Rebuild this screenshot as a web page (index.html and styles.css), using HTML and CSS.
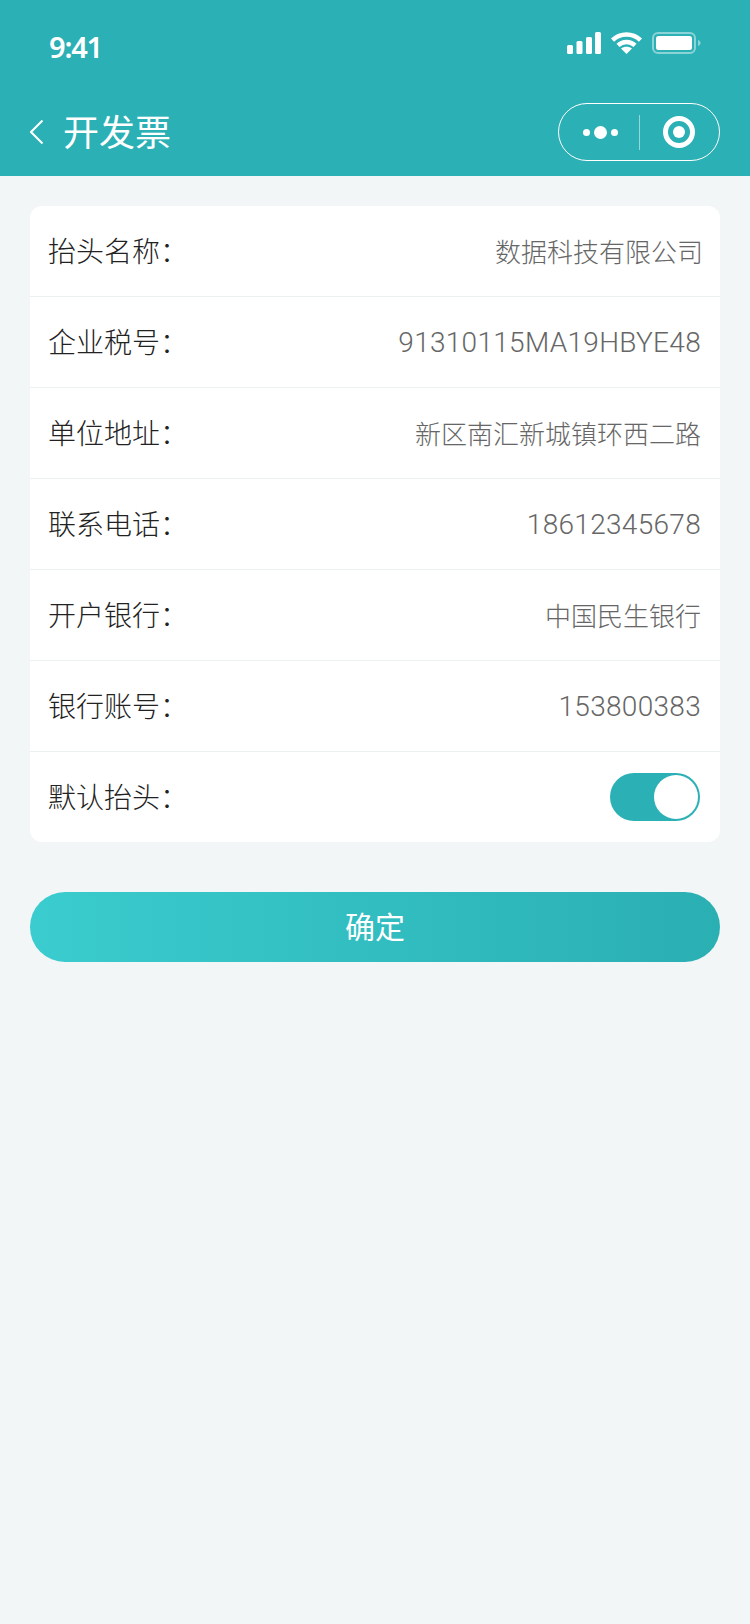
FILE: index.html
```html
<!DOCTYPE html>
<html lang="zh-CN">
<head>
    <meta charset="UTF-8">
    <meta name="viewport" content="width=device-width, initial-scale=1.0">
    <title>开发票</title>
    <link rel="stylesheet" href="styles.css">
</head>
<body>
    <div class="header">
        <div class="status-bar">
            <span class="time">9:41</span>
            <div class="status-icons">
                <svg width="34" height="22" viewBox="0 0 34 22" fill="#fff">
                    <rect x="0" y="13" width="6" height="9" rx="1.5"/>
                    <rect x="9.500" y="9" width="6" height="13" rx="1.5"/>
                    <rect x="19" y="5" width="6" height="17" rx="1.5"/>
                    <rect x="28" y="0" width="6" height="22" rx="1.5"/>
                </svg>
                <svg width="31" height="22" viewBox="0 0 31 22" fill="none" stroke="#fff" stroke-width="4.500">
                    <path d="M1.500 8.200C9.500 .6 21.500 .6 29.500 8.200"/>
                    <path d="M7 13.400c5-4.600 12-4.600 17 0"/>
                    <path d="M15.500 22l-5.500-5.500c3-2.400 8-2.400 11 0z" fill="#fff" stroke="none"/>
                </svg>
                <svg width="49" height="22" viewBox="0 0 49 22">
                    <rect x="1" y="1" width="42" height="20" rx="5" fill="none" stroke="#fff" stroke-opacity=".45" stroke-width="2"/>
                    <rect x="4" y="4" width="36" height="14" rx="2.500" fill="#fff"/>
                    <path d="M46 8c1.600.5 2.600 1.600 2.600 3s-1 2.500-2.600 3z" fill="#fff" fill-opacity=".45"/>
                </svg>
            </div>
        </div>
        <div class="nav-bar">
            <svg class="back" width="15" height="26" viewBox="0 0 15 26" fill="none" stroke="#fff" stroke-width="2">
                <path d="M12.500 1.500L1 13l11.500 11.500"/>
            </svg>
            <span class="nav-title">开发票</span>
            <div class="capsule">
                <div class="capsule-more">
                    <i class="dot"></i><i class="dot dot-big"></i><i class="dot"></i>
                </div>
                <div class="capsule-line"></div>
                <div class="capsule-close"><i class="target"></i></div>
            </div>
        </div>
    </div>

    <div class="content">
        <div class="card">
            <div class="row"><span class="label">抬头名称：</span><span class="value value-first">数据科技有限公司</span></div>
            <div class="row"><span class="label">企业税号：</span><span class="value value-num">91310115MA19HBYE48</span></div>
            <div class="row"><span class="label">单位地址：</span><span class="value">新区南汇新城镇环西二路</span></div>
            <div class="row"><span class="label">联系电话：</span><span class="value value-num">18612345678</span></div>
            <div class="row"><span class="label">开户银行：</span><span class="value">中国民生银行</span></div>
            <div class="row"><span class="label">银行账号：</span><span class="value value-num">153800383</span></div>
            <div class="row">
                <span class="label">默认抬头：</span>
                <div class="switch"><i class="switch-knob"></i></div>
            </div>
        </div>
        <button class="confirm"><span>确定</span></button>
    </div>
</body>
</html>
```

FILE: styles.css
```css
* {
    box-sizing: border-box;
}
html, body {
    height: 100%;
}
body {
    margin: 0;
    background: #f2f6f7;
    font-family: "Noto Sans CJK SC", "Noto Sans", sans-serif;
}
.header {
    height: 176px;
    background: #2bb0b5;
    color: #fff;
}
.status-bar {
    height: 88px;
    padding: 26px 49px 0 49px;
    display: flex;
    justify-content: space-between;
    align-items: flex-start;
}
.time {
    font-family: "Noto Sans", sans-serif;
    font-size: 29px;
    font-weight: 600;
    line-height: 42px;
    letter-spacing: -1.2px;
}
.status-icons {
    display: flex;
    align-items: flex-start;
    gap: 10px;
    padding-top: 6px;
}
.nav-bar {
    height: 88px;
    padding: 0 30px;
    display: flex;
    align-items: center;
}
.back {
    margin-right: 18px;
}
.nav-title {
    font-size: 36px;
    line-height: 48px;
    padding-bottom: 4px;
    flex: 1;
}
.capsule {
    width: 162px;
    height: 58px;
    border: 1.500px solid #fff;
    border-radius: 29px;
    display: flex;
    align-items: center;
}
.capsule-more {
    width: 80px;
    padding-left: 2px;
    display: flex;
    justify-content: center;
    align-items: center;
    gap: 4px;
}
.dot {
    width: 7px;
    height: 7px;
    border-radius: 50%;
    background: #fff;
}
.dot-big {
    width: 13px;
    height: 13px;
}
.capsule-line {
    width: 1px;
    height: 35px;
    background: rgba(255, 255, 255, 0.5);
}
.capsule-close {
    flex: 1;
    padding-right: 2px;
    display: flex;
    justify-content: center;
}
.target {
    width: 32px;
    height: 32px;
    border: 5px solid #fff;
    border-radius: 50%;
    display: flex;
    align-items: center;
    justify-content: center;
}
.target::after {
    content: "";
    width: 12px;
    height: 12px;
    border-radius: 50%;
    background: #fff;
}
.content {
    padding: 30px;
}
.card {
    background: #fff;
    border-radius: 12px;
}
.row {
    height: 91px;
    padding: 0 19px 0 18px;
    display: flex;
    justify-content: space-between;
    align-items: center;
    border-bottom: 1px solid #ecf0f1;
}
.row:last-child {
    height: 90px;
    border-bottom: none;
}
.label {
    font-size: 28px;
    font-weight: 300;
    color: #222;
    padding-bottom: 2px;
}
.value {
    font-size: 26px;
    font-weight: 300;
    color: #666;
    padding-bottom: 2px;
}
.value-first {
    margin-right: -2px;
}
.value-num {
    font-family: Roboto, "Noto Sans", sans-serif;
    font-size: 28px;
    letter-spacing: 0.3px;
    padding-bottom: 0;
}
.switch {
    width: 90px;
    height: 48px;
    margin-right: 1px;
    border-radius: 24px;
    background: #2bb0b5;
    padding: 2px;
    display: flex;
    justify-content: flex-end;
}
.switch-knob {
    width: 44px;
    height: 44px;
    border-radius: 50%;
    background: #fff;
}
.confirm {
    display: block;
    width: 100%;
    height: 70px;
    margin-top: 50px;
    padding: 0 0 4px;
    border: none;
    border-radius: 35px;
    background: linear-gradient(90deg, #3accce, #2aafb3);
    color: #fff;
    font-family: inherit;
    font-size: 30px;
}
```
